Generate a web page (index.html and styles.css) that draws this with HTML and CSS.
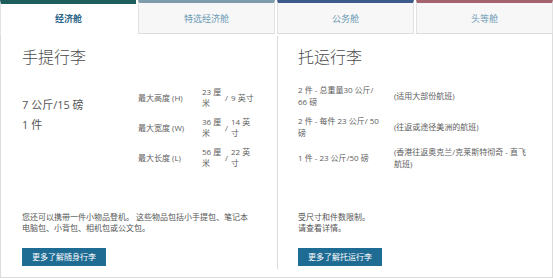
FILE: index.html
```html
<!DOCTYPE html>
<html lang="zh-CN">
<head>
    <meta charset="UTF-8">
    <title>行李额度</title>
    <link rel="stylesheet" href="styles.css">
</head>
<body>
<div class="baggage">
    <div class="tabs">
        <div class="tab economy active">经济舱</div>
        <div class="tab premium">特选经济舱</div>
        <div class="tab business">公务舱</div>
        <div class="tab first">头等舱</div>
    </div>
    <div class="panel">
        <div class="column">
            <h2>手提行李</h2>
            <div class="carry-on">
                <div class="allowance">
                    <div>7 公斤/15 磅</div>
                    <div>1 件</div>
                </div>
                <div class="sizes">
                    <div class="label">最大高度 (H)</div>
                    <div class="metric">23 厘米</div>
                    <div class="slash">/</div>
                    <div class="imperial">9 英寸</div>

                    <div class="label">最大宽度 (W)</div>
                    <div class="metric">36 厘米</div>
                    <div class="slash">/</div>
                    <div class="imperial">14 英寸</div>

                    <div class="label">最大长度 (L)</div>
                    <div class="metric">56 厘米</div>
                    <div class="slash">/</div>
                    <div class="imperial">22 英寸</div>
                </div>
            </div>
            <div class="footer">
                <p>您还可以携带一件小物品登机。 这些物品包括小手提包、笔记本电脑包、小背包、相机包或公文包。</p>
                <a class="btn" href="#">更多了解随身行李</a>
            </div>
        </div>
        <div class="column checked">
            <h2>托运行李</h2>
            <div class="pieces">
                <div class="amount">2 件 - 总重量30 公斤/ 66 磅</div>
                <div class="note">(适用大部份航班)</div>

                <div class="amount">2 件 - 每件 23 公斤/ 50 磅</div>
                <div class="note">(往返或途径美洲的航班)</div>

                <div class="amount">1 件 - 23 公斤/50 磅</div>
                <div class="note">(香港往返奥克兰/克莱斯特彻奇 - 直飞航班)</div>
            </div>
            <div class="footer">
                <p>受尺寸和件数限制。<br>请查看详情。</p>
                <a class="btn" href="#">更多了解托运行李</a>
            </div>
        </div>
    </div>
</div>
</body>
</html>
```

FILE: styles.css
```css
body {
    margin: 0;
    font-family: "Open Sans", "Noto Sans CJK SC", sans-serif;
    background: #fff;
    color: #555;
}
.baggage {
    width: 553px;
}
.tabs {
    display: flex;
    gap: 2px;
    height: 34px;
}
.tab {
    flex: 1;
    box-sizing: border-box;
    display: flex;
    align-items: center;
    justify-content: center;
    border-top: 3px solid #7d9aab;
    border-left: 1px solid #e2e2e2;
    border-right: 1px solid #e2e2e2;
    border-bottom: 1px solid #dcdcdc;
    background: #f7f7f7;
    color: #6d9bb6;
    font-size: 9px;
}
.tab.active {
    background: #fff;
    border-bottom-color: #fff;
    border-right: none;
    color: #2b668a;
    font-weight: 600;
}
.tab.economy { border-top-color: #1d5d5c; border-top-width: 4px; }
.tab.premium { border-top-color: #7f9cad; }
.tab.business { border-top-color: #3e5b8b; }
.tab.first { border-top-color: #a5636e; }
.panel {
    display: grid;
    grid-template-columns: 276px 1fr;
    height: 233px;
    padding: 2px 0 8px;
    border: 1px solid #dcdcdc;
    border-top: none;
}
.column {
    display: flex;
    flex-direction: column;
    padding: 11px 0 3px 21px;
}
.column.checked {
    border-left: 1px solid #dcdcdc;
    padding-left: 20px;
}
h2 {
    margin: 0;
    font-size: 16px;
    line-height: 20px;
    font-weight: 300;
    color: #4a4a4a;
}
.carry-on {
    display: flex;
    margin-top: 19px;
}
.allowance {
    width: 116px;
    padding-top: 9px;
    font-size: 11px;
    line-height: 20px;
    color: #555;
}
.sizes {
    display: grid;
    grid-template-columns: 64px 22px 7px 24px;
    row-gap: 8px;
    align-items: center;
    font-size: 8px;
    line-height: 11px;
    color: #5e5e5e;
}
.sizes .metric,
.sizes .imperial {
    min-height: 22px;
    display: flex;
    align-items: center;
}
.sizes .slash {
    padding-left: 1px;
}
.pieces {
    display: grid;
    grid-template-columns: 82px 136px;
    column-gap: 14px;
    row-gap: 7px;
    align-items: center;
    margin-top: 17px;
    font-size: 8px;
    line-height: 12px;
    color: #5e5e5e;
}
.pieces .amount {
    min-height: 24px;
    display: flex;
    align-items: center;
}
.footer {
    margin-top: auto;
}
.footer p {
    margin: 0 0 10px;
    font-size: 8px;
    line-height: 11px;
    color: #555;
    width: 232px;
}
.btn {
    display: inline-block;
    height: 18px;
    line-height: 18px;
    padding: 0 10px;
    background: #1e6b93;
    color: #fff;
    font-size: 8px;
    text-decoration: none;
}
```
